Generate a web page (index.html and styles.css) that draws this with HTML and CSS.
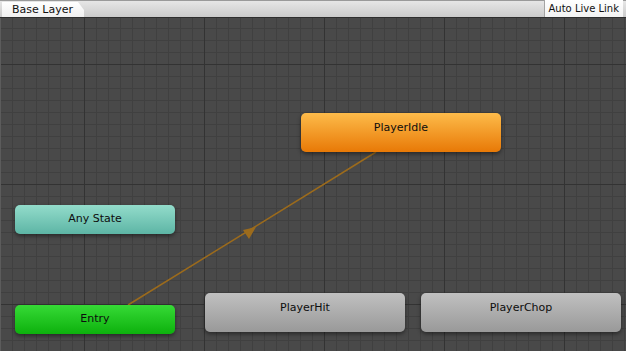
FILE: index.html
```html
<!DOCTYPE html>
<html lang="en">
<head>
    <meta charset="UTF-8">
    <title>Animator - Base Layer</title>
    <link rel="stylesheet" href="styles.css">
</head>
<body>
    <div class="window">
        <div class="toolbar">
            <div class="layer-tab">Base Layer</div>
            <div class="live-link">Auto Live Link</div>
        </div>

        <div class="graph">
            <svg class="transitions" width="626" height="333" viewBox="0 0 626 333">
                <line x1="128" y1="287" x2="376" y2="134" stroke="#9c6b1c" stroke-width="1.5"/>
                <polygon points="256,209 243,212 249,221" fill="#9c6b1c"/>
            </svg>

            <div class="state state-default" style="left: 301px; top: 95px;">PlayerIdle</div>
            <div class="state state-any" style="left: 15px; top: 187px;">Any State</div>
            <div class="state state-entry" style="left: 15px; top: 287px;">Entry</div>
            <div class="state state-normal" style="left: 205px; top: 275px;">PlayerHit</div>
            <div class="state state-normal" style="left: 421px; top: 275px;">PlayerChop</div>
        </div>
    </div>
</body>
</html>
```

FILE: styles.css
```css
* {
    margin: 0;
    padding: 0;
    box-sizing: border-box;
}

body {
    font-family: "DejaVu Sans", "Liberation Sans", sans-serif;
    background: #494949;
    width: 626px;
    height: 351px;
    overflow: hidden;
}

.window {
    display: flex;
    flex-direction: column;
    height: 100%;
}

.toolbar {
    height: 18px;
    display: flex;
    justify-content: space-between;
    align-items: flex-end;
    background: linear-gradient(#e6e6e6, #cbcbcb);
    border-top: 1px solid #9a9a9a;
    border-bottom: 1px solid #2e2e2e;
}

.layer-tab {
    height: 15px;
    width: 84px;
    margin-left: 2px;
    padding-left: 10px;
    font-size: 11px;
    line-height: 15px;
    color: #111;
    background: linear-gradient(#ffffff, #f0f0f0);
    clip-path: polygon(0 0, 76px 0, 82px 8px, 82px 100%, 0 100%);
}

.live-link {
    height: 17px;
    margin-right: 3px;
    padding: 0 4px;
    font-size: 10px;
    line-height: 17px;
    color: #111;
    background: linear-gradient(#ffffff, #f2f2f2);
    border-left: 1px solid #a4a4a4;
}

.graph {
    position: relative;
    flex: 1;
    background-color: #494949;
    background-image:
        linear-gradient(to right, #333333 1px, transparent 1px),
        linear-gradient(to bottom, #333333 1px, transparent 1px),
        linear-gradient(to right, #404040 1px, transparent 1px),
        linear-gradient(to bottom, #404040 1px, transparent 1px);
    background-size: 120px 120px, 120px 120px, 12px 12px, 12px 12px;
    background-position: 84px 0, 0 46px, 0 0, 0 10px;
    box-shadow: inset 1px 0 #5c5c5c;
}

.transitions {
    position: absolute;
    left: 0;
    top: 0;
}

.state {
    position: absolute;
    width: 200px;
    height: 39px;
    padding-top: 8px;
    border-radius: 5px;
    text-align: center;
    font-size: 11px;
    line-height: 14px;
    color: #0d0d0d;
    box-shadow: 0 2px 4px rgba(0, 0, 0, 0.45);
}

.state-default {
    background: linear-gradient(#fdbb4a, #e87906);
}

.state-normal {
    background: linear-gradient(#c0c0c0, #999999);
}

.state-any {
    width: 160px;
    height: 29px;
    padding-top: 7px;
    background: linear-gradient(#93dccb, #5db5a5);
}

.state-entry {
    width: 160px;
    height: 29px;
    padding-top: 7px;
    background: linear-gradient(#36da36, #0db10d);
}
```
